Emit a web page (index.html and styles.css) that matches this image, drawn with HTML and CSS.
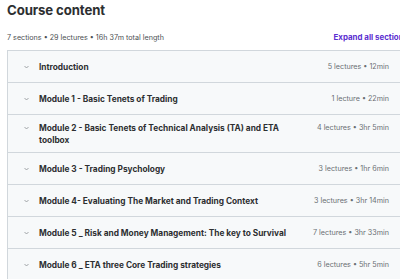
FILE: index.html
```html
<!DOCTYPE html>
<html lang="en">
<head>
    <meta charset="UTF-8">
    <meta name="viewport" content="width=device-width, initial-scale=1.0">
    <title>Course content</title>
    <link rel="stylesheet" href="styles.css">
</head>
<body>
    <div class="curriculum">
        <h2 class="title">Course content</h2>
        <div class="summary">
            <span class="stats">7 sections • 29 lectures • 16h 37m total length</span>
            <span class="expand">Expand all sections</span>
        </div>
        <div class="sections">
            <div class="section">
                <div class="line">
                    <span class="chevron"><svg width="5" height="4" viewBox="0 0 5 4"><polyline points="0.5,1 2.5,3 4.5,1" /></svg></span>
                    <span class="name">Introduction</span>
                    <span class="meta">5 lectures • 12min</span>
                </div>
            </div>
            <div class="section">
                <div class="line">
                    <span class="chevron"><svg width="5" height="4" viewBox="0 0 5 4"><polyline points="0.5,1 2.5,3 4.5,1" /></svg></span>
                    <span class="name">Module 1 - Basic Tenets of Trading</span>
                    <span class="meta">1 lecture • 22min</span>
                </div>
            </div>
            <div class="section">
                <div class="line">
                    <span class="chevron"><svg width="5" height="4" viewBox="0 0 5 4"><polyline points="0.5,1 2.5,3 4.5,1" /></svg></span>
                    <span class="name">Module 2 - Basic Tenets of Technical Analysis (TA) and ETA toolbox</span>
                    <span class="meta">4 lectures • 3hr 5min</span>
                </div>
            </div>
            <div class="section">
                <div class="line">
                    <span class="chevron"><svg width="5" height="4" viewBox="0 0 5 4"><polyline points="0.5,1 2.5,3 4.5,1" /></svg></span>
                    <span class="name">Module 3 - Trading Psychology</span>
                    <span class="meta">3 lectures • 1hr 6min</span>
                </div>
            </div>
            <div class="section">
                <div class="line">
                    <span class="chevron"><svg width="5" height="4" viewBox="0 0 5 4"><polyline points="0.5,1 2.5,3 4.5,1" /></svg></span>
                    <span class="name">Module 4- Evaluating The Market and Trading Context</span>
                    <span class="meta">3 lectures • 3hr 14min</span>
                </div>
            </div>
            <div class="section">
                <div class="line">
                    <span class="chevron"><svg width="5" height="4" viewBox="0 0 5 4"><polyline points="0.5,1 2.5,3 4.5,1" /></svg></span>
                    <span class="name">Module 5 _ Risk and Money Management: The key to Survival</span>
                    <span class="meta">7 lectures • 3hr 33min</span>
                </div>
            </div>
            <div class="section">
                <div class="line">
                    <span class="chevron"><svg width="5" height="4" viewBox="0 0 5 4"><polyline points="0.5,1 2.5,3 4.5,1" /></svg></span>
                    <span class="name">Module 6 _ ETA three Core Trading strategies</span>
                    <span class="meta">6 lectures • 5hr 5min</span>
                </div>
            </div>
        </div>
    </div>
</body>
</html>
```

FILE: styles.css
```css
body {
    margin: 0;
    background-color: #fff;
    color: #2d2f31;
    font-family: Inter, "Noto Sans", sans-serif;
    overflow: hidden;
}

.curriculum {
    width: 401px;
    padding: 1px 0 0 7px;
}

.title {
    margin: 0;
    font-size: 13.2px;
    line-height: 18px;
    font-weight: 700;
    letter-spacing: -0.1px;
}

.summary {
    display: flex;
    justify-content: space-between;
    align-items: center;
    margin-top: 13px;
    height: 10px;
    margin-bottom: 8px;
}

.stats {
    font-size: 7.2px;
    color: #4d5053;
}

.expand {
    font-size: 7.9px;
    font-weight: 700;
    color: #5b2fd0;
    white-space: nowrap;
}

.sections {
    border: 1px solid #d1d7dc;
    border-bottom: none;
}

.section {
    display: flex;
    align-items: center;
    box-sizing: border-box;
    min-height: 32px;
    padding: 6.5px 18px 6.5px 16px;
    background-color: #f7f9fa;
    border-top: 1px solid #d1d7dc;
}

.section:first-child {
    border-top: none;
    min-height: 31px;
}

.line {
    display: flex;
    align-items: flex-start;
    width: 100%;
    line-height: 12px;
}

.chevron {
    display: flex;
    align-items: center;
    height: 12px;
    margin-right: 10px;
}

.chevron polyline {
    fill: none;
    stroke: #8a8f93;
    stroke-width: 0.8;
}

.name {
    flex: 1;
    font-size: 8.3px;
    font-weight: 700;
}

.meta {
    margin-left: 16px;
    font-size: 7.2px;
    color: #6a6f73;
    white-space: nowrap;
}
```
